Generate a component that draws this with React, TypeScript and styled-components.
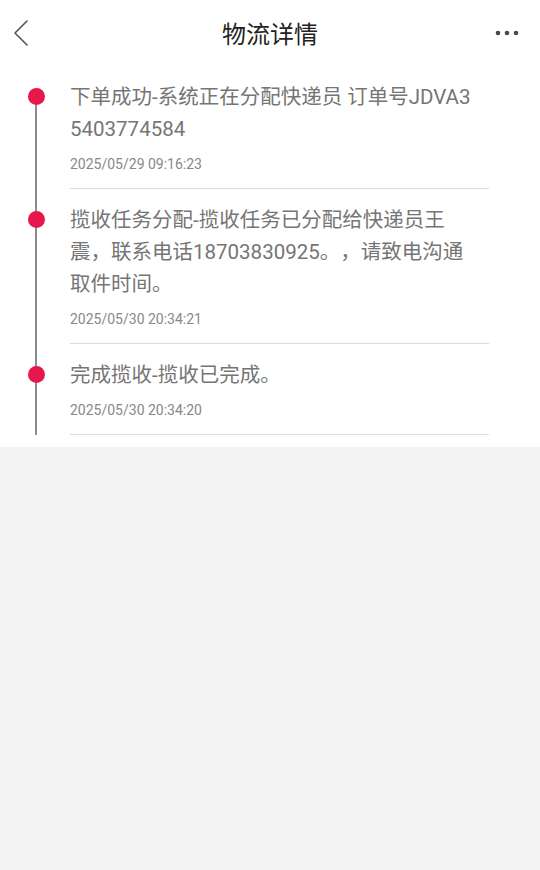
import React from "react";
import styled, { createGlobalStyle } from "styled-components";

const GlobalStyle = createGlobalStyle`
  html, body {
    margin: 0;
    padding: 0;
    background: #f4f4f4;
  }
  body {
    font-family: Roboto, "Noto Sans CJK SC", sans-serif;
    -webkit-font-smoothing: antialiased;
  }
  * { box-sizing: border-box; }
`;

const Page = styled.div`
  width: 540px;
  min-height: 870px;
  background: #f4f4f4;
`;

const WhiteSection = styled.div`
  background: #ffffff;
  padding-bottom: 12px;
`;

const Header = styled.header`
  height: 66px;
  display: grid;
  grid-template-columns: 60px 1fr 60px;
  align-items: center;
`;

const IconButton = styled.button<{ $align: "start" | "end" }>`
  border: none;
  background: none;
  padding: 0;
  margin: 0;
  height: 66px;
  display: flex;
  align-items: center;
  justify-content: ${(p) => (p.$align === "start" ? "flex-start" : "flex-end")};
  padding-left: ${(p) => (p.$align === "start" ? "12px" : "0")};
  padding-right: ${(p) => (p.$align === "end" ? "21px" : "0")};
  cursor: pointer;
`;

const Title = styled.h1`
  margin: 0;
  text-align: center;
  font-family: "Noto Sans CJK SC", sans-serif;
  font-size: 24px;
  font-weight: 400;
  color: #222222;
  line-height: 32px;
`;

const List = styled.ul`
  list-style: none;
  margin: 0;
  padding: 0;
`;

const Item = styled.li`
  display: flex;
`;

const Rail = styled.div<{ $first: boolean }>`
  width: 70px;
  flex: none;
  position: relative;
  &::before {
    content: "";
    position: absolute;
    left: 35px;
    width: 1.5px;
    top: ${(p) => (p.$first ? "30px" : "0")};
    bottom: 0;
    background: #8c8c8c;
  }
`;

const Dot = styled.span`
  position: relative;
  display: block;
  width: 17px;
  height: 17px;
  border-radius: 50%;
  background: #e5174b;
  margin-left: 27.5px;
  margin-top: 22px;
`;

const Content = styled.div`
  width: 419px;
  padding: 15px 11px 14px 0;
  border-bottom: 1px solid #dcdcdc;
`;

const Message = styled.p`
  margin: 0;
  font-size: 20.5px;
  line-height: 32px;
  color: #757575;
  word-break: break-all;
  text-spacing-trim: space-all;
`;

const Time = styled.div`
  margin-top: 9px;
  font-size: 14px;
  line-height: 20px;
  color: #888888;
`;

const events = [
  {
    text: "下单成功-系统正在分配快递员 订单号JDVA35403774584",
    time: "2025/05/29 09:16:23",
  },
  {
    text: "揽收任务分配-揽收任务已分配给快递员王震，联系电话18703830925。，请致电沟通取件时间。",
    time: "2025/05/30 20:34:21",
  },
  {
    text: "完成揽收-揽收已完成。",
    time: "2025/05/30 20:34:20",
  },
];

export default function App() {
  return (
    <Page>
      <GlobalStyle />
      <WhiteSection>
        <Header>
          <IconButton $align="start" aria-label="返回">
            <svg width="18" height="28" viewBox="0 0 18 28" fill="none">
              <path d="M15 2 L3 14 L15 26" stroke="#555" strokeWidth="1.6" strokeLinecap="round" strokeLinejoin="round" />
            </svg>
          </IconButton>
          <Title>物流详情</Title>
          <IconButton $align="end" aria-label="更多">
            <svg width="24" height="6" viewBox="0 0 24 6">
              <circle cx="3" cy="3" r="2.3" fill="#4a4a4a" />
              <circle cx="12" cy="3" r="2.3" fill="#4a4a4a" />
              <circle cx="21" cy="3" r="2.3" fill="#4a4a4a" />
            </svg>
          </IconButton>
        </Header>
        <List>
          {events.map((e, i) => (
            <Item key={i}>
              <Rail $first={i === 0}>
                <Dot />
              </Rail>
              <Content>
                <Message>{e.text}</Message>
                <Time>{e.time}</Time>
              </Content>
            </Item>
          ))}
        </List>
      </WhiteSection>
    </Page>
  );
}
